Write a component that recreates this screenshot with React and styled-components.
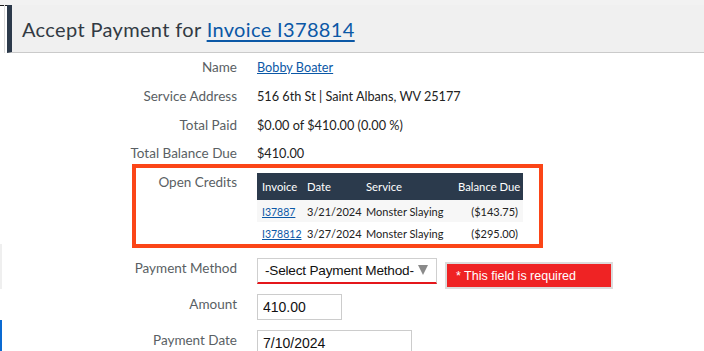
import React from "react";
import styled, { createGlobalStyle } from "styled-components";

const GlobalStyle = createGlobalStyle`
  body {
    margin: 0;
    background: #ffffff;
    font-family: Lato, "Open Sans", sans-serif;
    color: #222;
  }
`;

const credits = [
  { id: "I37887", date: "3/21/2024", service: "Monster Slaying", due: "($143.75)" },
  { id: "I378812", date: "3/27/2024", service: "Monster Slaying", due: "($295.00)" },
];

const App = () => {
  return (
    <>
      <GlobalStyle />
      <TopStrip />
      <HeaderWrap>
        <Gutter />
        <Header>
          <Title>
            Accept Payment for <TitleLink href="#">Invoice I378814</TitleLink>
          </Title>
        </Header>
      </HeaderWrap>

      <Form>
        <Row pad={4}>
          <Label>Name</Label>
          <Value>
            <ValueLink href="#">Bobby Boater</ValueLink>
          </Value>
        </Row>
        <Row pad={9}>
          <Label>Service Address</Label>
          <Value>516 6th St | Saint Albans, WV 25177</Value>
        </Row>
        <Row pad={9}>
          <Label>Total Paid</Label>
          <Value>$0.00 of $410.00 (0.00 %)</Value>
        </Row>
        <Row pad={8}>
          <Label>Total Balance Due</Label>
          <Value>$410.00</Value>
        </Row>

        {/* Open Credits, highlighted */}
        <CreditsRow>
          <Label tight>Open Credits</Label>
          <div>
            <CreditsTable>
              <thead>
                <tr>
                  <Th w={45}>Invoice</Th>
                  <Th w={59}>Date</Th>
                  <Th w={92}>Service</Th>
                  <Th w={70} right>Balance Due</Th>
                </tr>
              </thead>
              <tbody>
                {credits.map((c) => (
                  <Tr key={c.id}>
                    <Td>
                      <CreditLink href="#">{c.id}</CreditLink>
                    </Td>
                    <Td>{c.date}</Td>
                    <Td>{c.service}</Td>
                    <Td right>{c.due}</Td>
                  </Tr>
                ))}
              </tbody>
            </CreditsTable>
          </div>
        </CreditsRow>

        <Row pad={14} marker="#efefef">
          <Label>Payment Method</Label>
          <FieldLine>
            <SelectBox>
              <span>-Select Payment Method-</span>
              <Caret />
            </SelectBox>
            <ErrorTip>* This field is required</ErrorTip>
          </FieldLine>
        </Row>
        <Row pad={5}>
          <Label>Amount</Label>
          <div>
            <TextInput width={85} readOnly defaultValue="410.00" />
          </div>
        </Row>
        <Row pad={10} marker="#0a6ad2">
          <Label>Payment Date</Label>
          <div>
            <TextInput width={155} readOnly defaultValue="7/10/2024" />
          </div>
        </Row>
      </Form>
    </>
  );
};

export default App;

// Styled Components
const TopStrip = styled.div`
  height: 5px;
  background: #f2f2f2;
  border-bottom: 1px solid #1c1c1c;
`;

const HeaderWrap = styled.div`
  display: flex;
  margin-top: -1px;
`;

const Gutter = styled.div`
  width: 7px;
  background: linear-gradient(
    to right,
    transparent 4px,
    #dcdcdc 4px,
    #dcdcdc 5px,
    transparent 5px
  );
`;

const Header = styled.div`
  flex: 1;
  display: flex;
  align-items: center;
  height: 47px;
  padding-left: 10px;
  background: #f0f0f0;
  border-left: 5px solid #2c3a4b;
  border-bottom: 1px solid #cacaca;
`;

const Title = styled.h1`
  margin: 1px 0 0 0;
  font-size: 20px;
  font-weight: 400;
  letter-spacing: 0.35px;
  color: #323a43;
`;

const TitleLink = styled.a`
  color: #0b58a6;
  text-decoration: underline;
  text-underline-offset: 3px;
`;

const Form = styled.div`
  display: flex;
  flex-direction: column;
`;

const Row = styled.div`
  display: grid;
  grid-template-columns: 235px 1fr;
  column-gap: 20px;
  align-items: start;
  padding-top: ${(p) => p.pad || 0}px;
  border-left: 2px solid ${(p) => p.marker || "transparent"};
`;

const CreditsRow = styled(Row)`
  position: relative;
  margin-top: 10px;

  &::after {
    content: "";
    position: absolute;
    top: -9px;
    left: 130px;
    width: 411px;
    height: 84px;
    box-sizing: border-box;
    border: 4px solid #fb4517;
    pointer-events: none;
  }
`;

const Label = styled.div`
  text-align: right;
  font-size: 13.5px;
  line-height: ${(p) => (p.tight ? 18 : 20)}px;
  color: #5a5f64;
`;

const Value = styled.div`
  font-size: 12.7px;
  line-height: 20px;
  color: #222;
`;

const ValueLink = styled.a`
  color: #0b58a6;
  text-decoration: underline;
`;

const CreditLink = styled(ValueLink)`
  font-size: 10.5px;
`;

const CreditsTable = styled.table`
  width: 266px;
  table-layout: fixed;
  border-collapse: collapse;
  font-size: 11px;
  color: #222;
`;

const Th = styled.th`
  width: ${(p) => p.w}px;
  height: 27px;
  padding: 0 ${(p) => (p.right ? 5 : 0)}px 0 5px;
  background: #2b3a4c;
  color: #ffffff;
  font-weight: 400;
  font-size: 11.3px;
  text-align: ${(p) => (p.right ? "right" : "left")};
  white-space: nowrap;
  box-sizing: border-box;
`;

const Tr = styled.tr`
  &:nth-child(odd) {
    background: #f7f7f7;
  }
`;

const Td = styled.td`
  height: 22px;
  padding: 0 ${(p) => (p.right ? 5 : 0)}px 0 5px;
  text-align: ${(p) => (p.right ? "right" : "left")};
  white-space: nowrap;
`;

const FieldLine = styled.div`
  display: flex;
  align-items: flex-start;
  gap: 8px;
`;

const SelectBox = styled.div`
  box-sizing: border-box;
  width: 180px;
  height: 26px;
  display: flex;
  align-items: center;
  justify-content: space-between;
  padding: 0 8px 0 7px;
  border: 1px solid #cfcfcf;
  border-bottom: 2px solid #e4161b;
  font-family: "Liberation Sans", Arial, sans-serif;
  font-size: 13.6px;
  letter-spacing: -0.2px;
  white-space: nowrap;
  color: #111;
`;

const Caret = styled.span`
  flex: none;
  width: 0;
  height: 0;
  border-left: 5px solid transparent;
  border-right: 5px solid transparent;
  border-top: 10px solid #8a8a8a;
  margin-top: -2px;
`;

const ErrorTip = styled.div`
  box-sizing: border-box;
  margin-top: 4px;
  width: 168px;
  height: 27px;
  display: flex;
  align-items: center;
  padding-left: 9px;
  background: #ef2324;
  border: 2px solid #dcdcdc;
  color: #ffffff;
  font-family: "Liberation Sans", Arial, sans-serif;
  font-size: 12.5px;
  white-space: nowrap;
`;

const TextInput = styled.input`
  box-sizing: border-box;
  width: ${(p) => p.width}px;
  height: 26px;
  margin: 0;
  padding: 0 5px;
  border: 1px solid #cccccc;
  border-radius: 0;
  font-family: "Liberation Sans", Arial, sans-serif;
  font-size: 14px;
  color: #111;
  outline: none;
`;
